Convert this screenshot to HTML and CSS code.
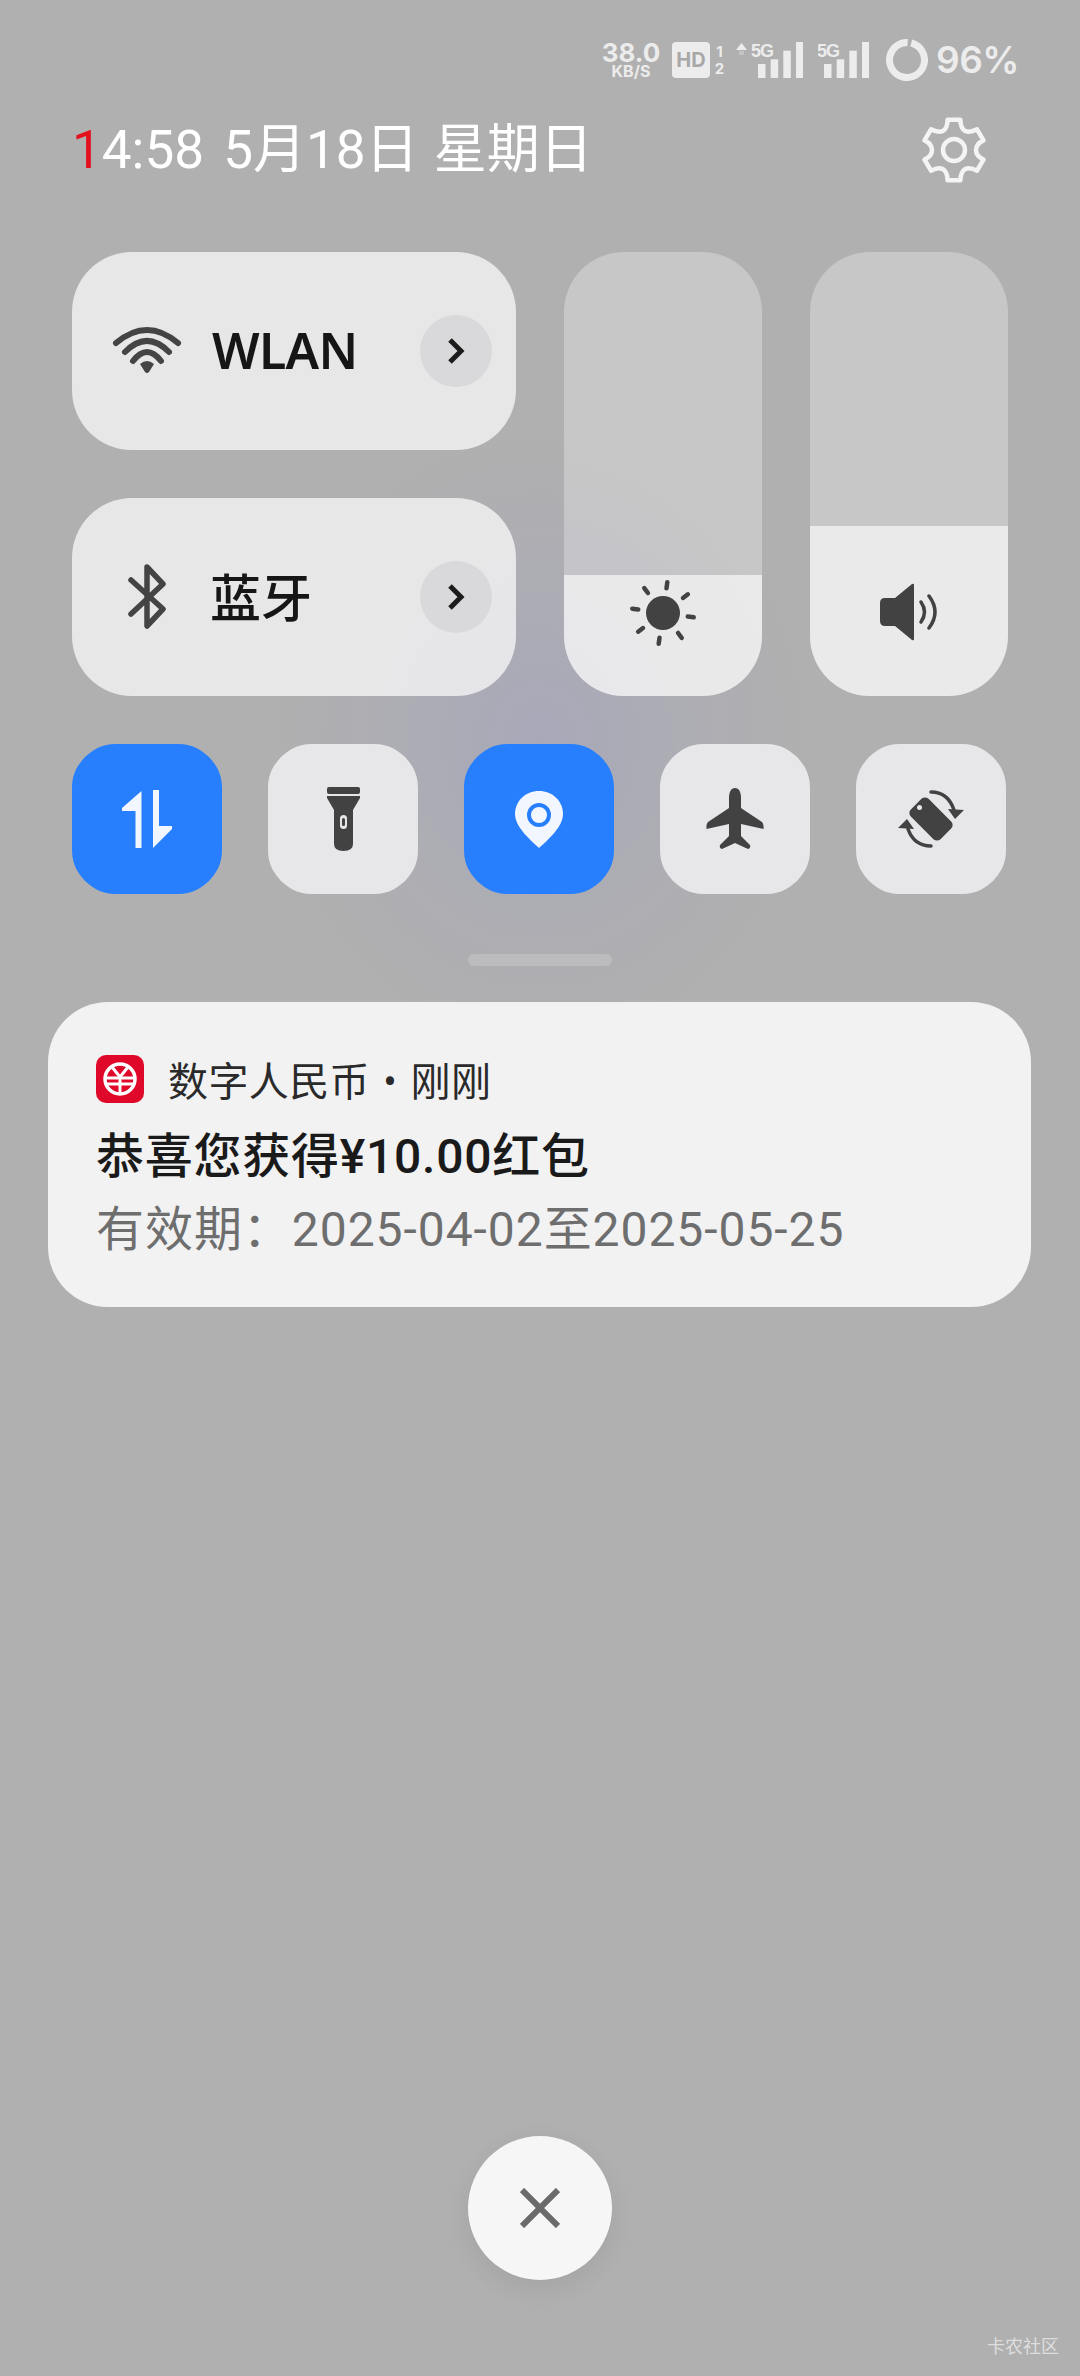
FILE: index.html
```html
<!DOCTYPE html>
<html lang="zh-CN">
<head>
  <meta charset="UTF-8" />
  <meta name="viewport" content="width=device-width, initial-scale=1" />
  <title>控制中心</title>
  <link rel="stylesheet" href="styles.css">
</head>
<body>
  <div class="status">
    <div class="speed"><span class="speed-num">38.0</span><span class="speed-unit">KB/S</span></div>
    <div class="hd">HD</div>
    <div class="sim"><span>1</span><span>2</span></div>
    <svg class="signal-a" width="67" height="36" viewBox="0 0 67 36">
      <polygon points="0,8 5.5,1 11,8" fill="#ececec"/>
      <rect x="3" y="9" width="5" height="4" fill="#c4c4c4"/>
      <text x="15" y="15" class="net">5G</text>
      <rect x="22" y="22" width="7.5" height="14" fill="#ececec"/>
      <rect x="34.7" y="17.3" width="7.5" height="18.7" fill="#ececec"/>
      <rect x="47.3" y="8.7" width="7.5" height="27.3" fill="#ececec"/>
      <rect x="60" y="0" width="7" height="36" fill="#ececec"/>
    </svg>
    <svg class="signal-b" width="51" height="36" viewBox="0 0 51 36">
      <text x="-1" y="15" class="net">5G</text>
      <rect x="6" y="22" width="7.5" height="14" fill="#ececec"/>
      <rect x="18.7" y="17.3" width="7.5" height="18.7" fill="#ececec"/>
      <rect x="31.3" y="8.7" width="7.5" height="27.3" fill="#ececec"/>
      <rect x="44" y="0" width="7" height="36" fill="#ececec"/>
    </svg>
    <svg class="ring" width="42" height="42" viewBox="0 0 42 42">
      <circle cx="21" cy="21" r="17.5" fill="none" stroke="#ececec" stroke-width="7" stroke-dasharray="105.5 110" transform="rotate(-76 21 21)"/>
    </svg>
    <div class="battery">96%</div>
  </div>

  <div class="header">
    <div class="clock"><span class="clock-red">1</span>4:58 5月18日 <span class="clock-week">星期日</span></div>
    <svg class="gear" width="80" height="80" viewBox="0 0 80 80" fill="none" stroke="#f4f4f4" stroke-width="4.5" stroke-linejoin="round">
      <path d="M33.6 9.7H46.4Q46.5 18 51 20.9Q56 23 63 19.3L69.5 30.4Q62 34 62 40Q62 46 69.5 49.6L63 60.7Q56 57 51 59.1Q46.5 62 46.4 70.3H33.6Q33.5 62 29 59.1Q24 57 17 60.7L10.5 49.6Q18 46 18 40Q18 34 10.5 30.4L17 19.3Q24 23 29 20.9Q33.5 18 33.6 9.7Z"/>
      <circle cx="40" cy="40" r="11"/>
    </svg>
  </div>

  <div class="controls">
    <div class="tile tile-wifi">
      <div class="tile-icon">
        <svg width="74" height="52" viewBox="0 0 74 52" fill="none" stroke="#444" stroke-width="6" stroke-linecap="round">
          <path d="M6 18Q37 -8 68 18"/>
          <path d="M15 27Q37 5 59 27"/>
          <path d="M23 36Q37 18 51 36"/>
          <path d="M30 39Q37 33 44 39L39 47Q37 49 35 47Z" fill="#444" stroke="none"/>
        </svg>
      </div>
      <span class="tile-label label-latin">WLAN</span>
      <div class="tile-more">
        <svg width="20" height="30" viewBox="0 0 20 30" fill="none" stroke="#1c1c1c" stroke-width="5"><polyline points="4,4 15,15 4,26"/></svg>
      </div>
    </div>

    <div class="slider">
      <div class="slider-fill fill-light">
        <svg width="76" height="76" viewBox="0 0 76 76">
          <circle cx="38" cy="38" r="17" fill="#424242"/>
          <g transform="rotate(8 38 38)" stroke="#424242" stroke-width="4.5" stroke-linecap="round">
            <line x1="38" y1="7" x2="38" y2="13"/>
            <line x1="38" y1="63" x2="38" y2="69"/>
            <line x1="7" y1="38" x2="13" y2="38"/>
            <line x1="63" y1="38" x2="69" y2="38"/>
            <line x1="16" y1="16" x2="20.3" y2="20.3"/>
            <line x1="55.7" y1="55.7" x2="60" y2="60"/>
            <line x1="16" y1="60" x2="20.3" y2="55.7"/>
            <line x1="55.7" y1="20.3" x2="60" y2="16"/>
          </g>
        </svg>
      </div>
    </div>

    <div class="slider">
      <div class="slider-fill fill-volume">
        <svg width="60" height="60" viewBox="0 0 60 60">
          <path d="M6 16H16L33 2Q35 1 35 3V57Q35 59 33 58L16 44H6Q1 44 1 39V21Q1 16 6 16Z" fill="#424242"/>
          <g fill="none" stroke="#424242" stroke-width="3.5" stroke-linecap="round">
            <path d="M42 20Q49 30 42 40"/>
            <path d="M50 14Q62 30 50 46"/>
          </g>
        </svg>
      </div>
    </div>

    <div class="tile tile-bt">
      <div class="tile-icon">
        <svg width="44" height="70" viewBox="0 0 44 70" fill="none" stroke="#444" stroke-width="5.5" stroke-linejoin="round" stroke-linecap="round">
          <polyline points="6,18 38,47 22,64 22,5 38,22 6,52"/>
        </svg>
      </div>
      <span class="tile-label label-cjk">蓝牙</span>
      <div class="tile-more">
        <svg width="20" height="30" viewBox="0 0 20 30" fill="none" stroke="#1c1c1c" stroke-width="5"><polyline points="4,4 15,15 4,26"/></svg>
      </div>
    </div>
  </div>

  <div class="toggles">
    <div class="toggle on">
      <svg width="54" height="62" viewBox="0 0 54 62" fill="#f2f6ff">
        <polygon points="21.5,3 21.5,60 15.5,60 15.5,23 2,23 2,20"/>
        <polygon points="33,2 39,2 39,38 52,38 52,41 33,60"/>
      </svg>
    </div>
    <div class="toggle">
      <svg width="36" height="66" viewBox="0 0 36 66" fill="#424242">
        <rect x="2" y="1" width="33" height="7" rx="2"/>
        <path d="M2 10H35V12L28 24V58Q28 65 18.5 65Q9 65 9 58V24L2 12Z"/>
        <rect x="15" y="29" width="7" height="14" rx="3.5" fill="#e6e6e8"/>
        <rect x="17" y="32" width="3" height="8" rx="1.5"/>
      </svg>
    </div>
    <div class="toggle on">
      <svg width="54" height="62" viewBox="0 0 54 62">
        <path d="M27 3C40.5 3 51 13 51 26C51 38 38 50 27 60C16 50 3 38 3 26C3 13 13.5 3 27 3Z" fill="#f2f6ff"/>
        <circle cx="27" cy="27" r="10" fill="none" stroke="#277ffe" stroke-width="4"/>
      </svg>
    </div>
    <div class="toggle">
      <svg width="60" height="66" viewBox="0 0 60 66" fill="#424242">
        <path d="M30 2C34 2 36 6 36 12V22L57 36Q59 38 58.5 43L36 38V50L45 59Q46 62 43 63L30 57L17 63Q14 62 15 59L24 50V38L1.500 43Q1 38 3 36L24 22V12C24 6 26 2 30 2Z"/>
      </svg>
    </div>
    <div class="toggle">
      <svg width="80" height="80" viewBox="-40 -40 80 80">
        <g fill="#424242">
          <rect x="-21" y="-12.500" width="42" height="25" rx="5" transform="rotate(45)"/>
          <polygon points="17,-10 33,-9 24,0"/>
          <polygon points="-33,9 -24,0 -17,10"/>
        </g>
        <circle cx="-11.500" cy="-11.500" r="2.500" fill="#e6e6e8"/>
        <g fill="none" stroke="#424242" stroke-width="3.500" stroke-linecap="round">
          <path d="M0 -27Q17 -27 23 -9"/>
          <path d="M0 27Q-17 27 -23 10"/>
        </g>
      </svg>
    </div>
  </div>

  <div class="handle"></div>

  <div class="notice">
    <div class="notice-app">
      <svg class="notice-logo" width="48" height="48" viewBox="0 0 48 48">
        <rect width="48" height="48" rx="10" fill="#e0082a"/>
        <circle cx="24" cy="24" r="15" fill="none" stroke="#fff" stroke-width="3.500"/>
        <g fill="none" stroke="#fff" stroke-width="3">
          <path d="M16 12L24 22L32 12"/>
          <path d="M10 23H38M10 29H38"/>
          <path d="M24 22V38"/>
        </g>
      </svg>
      <span>数字人民币 • 刚刚</span>
    </div>
    <div class="notice-title">恭喜您获得¥10.00红包</div>
    <div class="notice-text">有效期：2025-04-02至2025-05-25</div>
  </div>

  <div class="close">
    <svg width="40" height="40" viewBox="0 0 40 40" stroke="#6b6b6b" stroke-width="6"><path d="M2 2L38 38M38 2L2 38"/></svg>
  </div>

  <div class="watermark">卡农社区</div>
</body>
</html>
```

FILE: styles.css
```css
* { box-sizing: border-box; }

body {
  margin: 0;
  width: 1080px;
  height: 2376px;
  display: flex;
  flex-direction: column;
  overflow: hidden;
  background-color: #b0b0b0;
  background-image: radial-gradient(ellipse 270px 310px at 540px 740px, #a8a8b9 0%, rgba(170, 170, 184, 0.55) 50%, rgba(176, 176, 176, 0) 100%);
  font-family: Roboto, "Noto Sans CJK SC", sans-serif;
  color: #1a1a1a;
}

/* status bar */
.status {
  display: flex;
  align-items: center;
  height: 81px;
  padding: 39px 65px 0 0;
  justify-content: flex-end;
  color: #ececec;
}

.speed {
  display: flex;
  flex-direction: column;
  align-items: center;
  width: 58px;
  font-weight: 700;
  line-height: 1;
  font-family: Inter, sans-serif;
}

.speed-num { font-size: 26px; height: 22px; line-height: 22px; }
.speed-unit { font-size: 16px; height: 15px; line-height: 15px; }

.hd {
  width: 38px;
  height: 36px;
  margin-left: 12px;
  border-radius: 4px;
  background: #ececec;
  color: #a8a8a8;
  font: 700 20px/36px Inter, sans-serif;
  text-align: center;
}

.sim {
  display: flex;
  flex-direction: column;
  width: 11px;
  margin-left: 4px;
  font: 700 15px/17px Inter, sans-serif;
  text-align: center;
}

.signal-a { margin-left: 11px; }
.signal-b { margin-left: 15px; }
.ring { margin-left: 17px; }

.net {
  font: 700 18px "Liberation Sans", sans-serif;
  fill: #ececec;
  letter-spacing: -1px;
}

.battery {
  width: 79px;
  margin-left: 8px;
  font: 600 37px/42px Inter, sans-serif;
  letter-spacing: -0.5px;
  white-space: nowrap;
}

/* time row */
.header {
  display: flex;
  align-items: center;
  justify-content: space-between;
  height: 80px;
  margin-top: 29px;
  padding: 0 86px 0 72px;
}

.clock {
  color: #fff;
  font-size: 53px;
  line-height: 80px;
  word-spacing: 6px;
  white-space: nowrap;
}

.clock-red { color: #e3101e; }
.clock-week { margin-left: -4px; }

.gear { flex: none; }

/* tiles and sliders */
.controls {
  display: grid;
  grid-template-columns: 444px 198px 198px;
  grid-template-rows: 198px 198px;
  gap: 48px;
  margin: 62px 0 0 72px;
}

.tile {
  display: flex;
  align-items: center;
  border-radius: 60px;
  background: rgba(255, 255, 255, 0.7);
  padding: 0 24px 0 38px;
}

.tile-wifi { grid-column: 1; grid-row: 1; }
.tile-bt { grid-column: 1; grid-row: 2; }

.tile-icon {
  display: flex;
  justify-content: center;
  width: 74px;
  flex: none;
}

.tile-label {
  margin-left: 28px;
  font-size: 50px;
  color: #161616;
}

.label-latin {
  font-family: "Noto Sans", sans-serif;
  font-weight: 600;
  letter-spacing: -0.7px;
  padding-bottom: 2px;
}

.label-cjk {
  margin-left: 26px;
  font-size: 51px;
  font-weight: 500;
  padding-bottom: 5px;
}

.tile-more {
  display: flex;
  align-items: center;
  justify-content: center;
  width: 72px;
  height: 72px;
  margin-left: auto;
  border-radius: 50%;
  background: #d9d9db;
}

.slider {
  grid-row: 1 / span 2;
  display: flex;
  flex-direction: column;
  justify-content: flex-end;
  border-radius: 60px;
  overflow: hidden;
  background: rgba(255, 255, 255, 0.29);
}

.slider-fill {
  display: flex;
  justify-content: center;
  background: rgba(255, 255, 255, 0.62);
}

.fill-light { height: 121px; }
.fill-volume { height: 170px; padding-top: 56px; }

/* round toggles */
.toggles {
  display: flex;
  gap: 46px;
  margin: 48px 0 0 72px;
}

.toggle {
  display: flex;
  align-items: center;
  justify-content: center;
  width: 150px;
  height: 150px;
  background: #e7e7e9;
  clip-path: path("M44 0H106C122 0 130 7 137 13C143 20 150 28 150 44V106C150 122 143 130 137 137C130 143 122 150 106 150H44C28 150 20 143 13 137C7 130 0 122 0 106V44C0 28 7 20 13 13C20 7 28 0 44 0Z");
}

.toggle.on { background: #277ffe; }

.handle {
  width: 144px;
  height: 12px;
  margin: 60px auto 0;
  border-radius: 6px;
  background: #bcbcbe;
}

/* notification */
.notice {
  width: 983px;
  height: 305px;
  margin: 36px 0 0 48px;
  padding: 51px 48px 0;
  border-radius: 60px;
  background: #f2f2f3;
}

.notice-app {
  display: flex;
  align-items: center;
  gap: 24px;
  height: 52px;
  font-size: 40px;
  letter-spacing: 0.4px;
  word-spacing: 3px;
  color: #2a2a2a;
}

.notice-logo { flex: none; }

.notice-title {
  margin-top: 20px;
  font-size: 48px;
  font-weight: 500;
  letter-spacing: 0.75px;
  line-height: 64px;
}

.notice-text {
  margin-top: 9px;
  font-size: 48px;
  letter-spacing: 0.95px;
  line-height: 64px;
  color: #6e6e6e;
  white-space: nowrap;
}

/* bottom */
.close {
  display: flex;
  align-items: center;
  justify-content: center;
  flex: none;
  width: 144px;
  height: 144px;
  margin: auto auto 96px;
  border-radius: 50%;
  background: #f6f6f6;
  box-shadow: 0 8px 26px rgba(0, 0, 0, 0.07);
}

.watermark {
  position: absolute;
  right: 21px;
  bottom: 18px;
  font-size: 18px;
  color: #dedede;
}
```
